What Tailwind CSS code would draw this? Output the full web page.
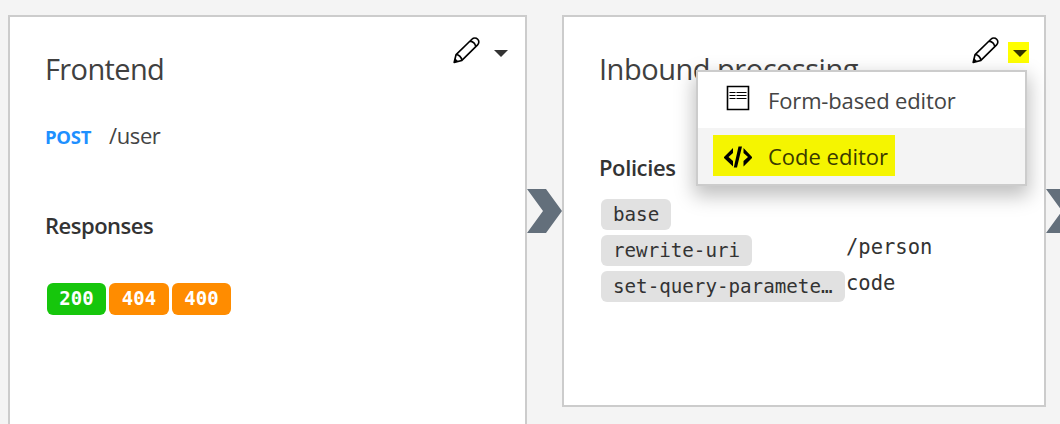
<!DOCTYPE html>
<html lang="en">
<head>
<meta charset="utf-8">
<title>API design</title>
<script src="https://cdn.jsdelivr.net/npm/@tailwindcss/browser@4"></script>
</head>
<body class="w-[1060px] h-[424px] overflow-hidden bg-[#f4f4f4] text-[#333] font-['Open_Sans','Noto_Sans',sans-serif]">
<svg class="hidden">
  <symbol id="pencil" viewBox="0 0 28 28"><g fill="none" stroke="#000" stroke-width="1.7" stroke-linejoin="round"><path d="M1.2 26.3 3.2 18.2 19.6 2.3C21.4.6 24 .7 25.600 2.300 27.200 3.900 27.200 6.500 25.500 8.200L9.200 24.300ZM17.600 4.300C20.600 4.300 23.500 7.200 23.500 10.200M3.200 18.200C6.200 18.400 9.000 21.200 9.200 24.300"/></g><path d="M1 26.500 2.100 21.800 5.500 25.300Z"/></symbol>
</svg>
<div class="flex h-[424px] w-[1060px] overflow-hidden pl-2 pt-[15px]">
  <section class="flex h-[409px] w-[519px] shrink-0 justify-between border-2 border-b-0 border-[#ccc] bg-white pl-[35px]">
    <div class="pt-8">
      <h2 class="h-10 whitespace-nowrap text-[29px] leading-10 text-[#404040] tracking-[-0.62px]">Frontend</h2>
      <div class="mt-[30px] flex h-8 items-baseline gap-[18px] leading-8"><b class="text-[18.500px] tracking-[-0.3px] text-[#1e90ff]">POST</b><span class="text-[22px] text-[#444] tracking-[-0.4px]">/user</span></div>
      <h3 class="mt-[58px] h-8 text-[22px] leading-8 font-semibold tracking-[-0.5px]">Responses</h3>
      <div class="mt-[42px] ml-0.5 flex gap-[3px] font-['DejaVu_Sans_Mono',monospace] text-[19px] leading-[31px] font-bold text-white">
        <span class="h-8 w-[59px] rounded-md bg-[#16c60c] text-center">200</span>
        <span class="h-8 w-[60px] rounded-md bg-[#ff8c00] text-center">404</span>
        <span class="h-8 w-[59px] rounded-md bg-[#ff8c00] text-center">400</span>
      </div>
    </div>
    <div class="flex items-start pt-[19px] pr-[14px]">
      <svg class="mr-[2px] mt-px h-[27px] w-[27px]"><use href="#pencil"/></svg>
      <svg class="mt-[6px] ml-[8px] h-[21px] w-[21px]" viewBox="0 0 21 21"><path d="M4 8h14l-7 7z" fill="#333"/></svg>
    </div>
  </section>
  <svg class="mt-[174px] h-11 w-[35px] shrink-0" viewBox="0 0 35 44"><path d="M0 0h19l16 22-16 22H0l16-22z" fill="#636f7b"/></svg>
  <section class="relative flex h-[392px] w-[484px] shrink-0 justify-between border-2 border-[#ccc] bg-white pl-[35px]">
    <div class="pt-8">
      <h2 class="h-10 w-[300px] whitespace-nowrap text-[29px] leading-10 text-[#404040] tracking-[-0.48px]">Inbound processing</h2>
      <h3 class="mt-[62px] h-8 text-[22px] leading-8 font-semibold tracking-[-0.4px]">Policies</h3>
      <div class="mt-4 ml-0.5 grid grid-cols-[245px_auto] gap-y-[5px] font-['DejaVu_Sans_Mono',monospace] text-[19.200px] leading-[31px]">
        <span class="h-[31px] w-[70px] rounded-md bg-[#e1e1e1] pl-3">base</span><span></span>
        <span class="h-[31px] w-[151px] rounded-md bg-[#e1e1e1] pl-3">rewrite-uri</span><span class="text-[20.500px] leading-[24px]">/person</span>
        <span class="h-[31px] w-[244px] rounded-md bg-[#e1e1e1] pl-3">set-query-paramete…</span><span class="text-[20.500px] leading-[24px]">code</span>
      </div>
    </div>
    <div class="absolute top-[19px] right-[15px] flex items-start">
      <svg class="mr-px mt-px h-[27px] w-[27px]"><use href="#pencil"/></svg>
      <svg class="mt-[6px] ml-[8px] h-[21px] w-[21px] bg-[#ff0]" viewBox="0 0 21 21"><path d="M5 8h14l-7 7z" fill="#333300"/></svg>
    </div>
    <div class="absolute top-[53px] left-[132px] h-[116px] w-[331px] border-2 border-[#ccc] bg-white text-[22px] text-[#444] shadow-[0_8px_18px_2px_rgba(0,0,0,0.25)]">
      <div class="flex h-14 items-start pl-7 pt-3">
        <svg class="mt-px h-[26px] w-6" viewBox="0 0 24 26"><path d="M1.500 1.500h21v23h-21z" fill="none" stroke="#000" stroke-width="1.600"/><path d="M3.500 7.500h6M10.500 7.500h10M3.500 10.500h6M10.500 10.500h10M3.500 13.500h6M10.500 13.500h10" stroke="#000" stroke-width="1.200"/></svg>
        <span class="ml-[18px] whitespace-nowrap leading-8 tracking-[-0.15px]">Form-based editor</span>
      </div>
      <div class="h-14 bg-[#f4f4f4] pt-[7px] pl-[15px]">
        <div class="flex h-[41px] w-[182px] items-start bg-[#f5f500] pl-[11px] text-[#3a3a00]">
          <svg class="mt-[11px] h-[22px] w-7 shrink-0" viewBox="0 0 28 22"><path d="M0 11 9 2v5l-4.500 4L9 15v5.500L0 12zM28 11 19.500 2v5l4.500 4-4.500 4v5.500L28 12zM14.500.500h3.500L13 21.500H9.800z"/></svg>
          <span class="ml-4 whitespace-nowrap leading-[43px]">Code editor</span>
        </div>
      </div>
    </div>
  </section>
  <svg class="mt-[174px] h-11 w-[35px] shrink-0" viewBox="0 0 35 44"><path d="M0 0h19l16 22-16 22H0l16-22z" fill="#636f7b"/></svg>
</div>
</body>
</html>
